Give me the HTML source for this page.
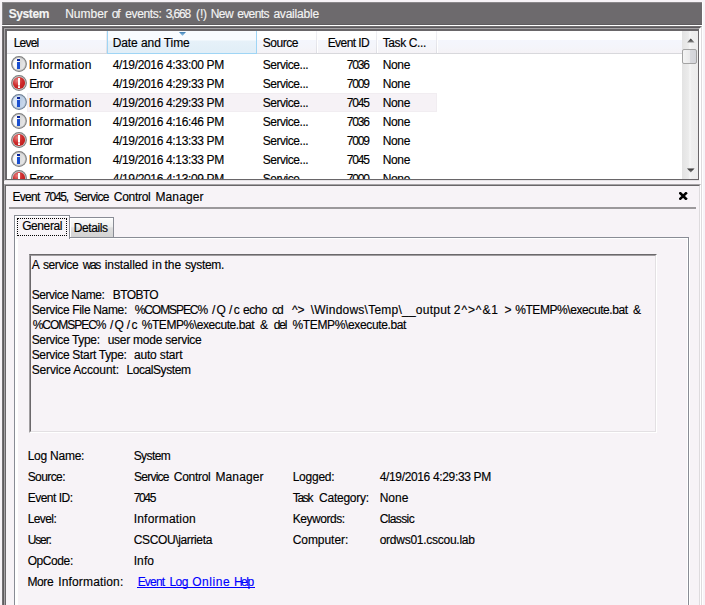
<!DOCTYPE html>
<html><head><meta charset="utf-8"><style>
html,body{margin:0;padding:0;}
body{width:705px;height:605px;overflow:hidden;position:relative;background:#f7f3f7;font-family:"Liberation Sans",sans-serif;font-size:12px;color:#000;}
.t{position:absolute;white-space:pre;line-height:15px;font-size:12px;-webkit-text-stroke:0.15px currentColor;}
</style></head><body>
<div style="position:absolute;left:2px;top:2px;width:700px;height:23px;background:#6d6a6d;box-sizing:border-box;border-top:1px solid #8a878a;border-left:1px solid #8a878a;border-bottom:1px solid #5e5b5e;"></div>
<div class="t" style="left:8.70px;top:7px;letter-spacing:-0.400px;font-weight:bold;color:#f4f4f4;">System</div>
<div class="t" style="left:65.20px;top:7px;color:#f4f4f4;">Number</div>
<div class="t" style="left:111.80px;top:7px;letter-spacing:-1.100px;color:#f4f4f4;">of</div>
<div class="t" style="left:125.30px;top:7px;letter-spacing:-0.367px;color:#f4f4f4;">events:</div>
<div class="t" style="left:165.70px;top:7px;letter-spacing:-1.125px;color:#f4f4f4;">3,668</div>
<div class="t" style="left:196.10px;top:7px;letter-spacing:-0.200px;color:#f4f4f4;">(!)</div>
<div class="t" style="left:210.70px;top:7px;letter-spacing:-0.500px;color:#f4f4f4;">New</div>
<div class="t" style="left:237.20px;top:7px;letter-spacing:-0.620px;color:#f4f4f4;">events</div>
<div class="t" style="left:273.40px;top:7px;letter-spacing:-0.212px;color:#f4f4f4;">available</div>
<div style="position:absolute;left:2px;top:25px;width:700px;height:1px;background:#ffffff;"></div>
<div style="position:absolute;left:702px;top:2px;width:1px;height:610px;background:#ffffff;"></div>
<div style="position:absolute;left:2px;top:26px;width:700px;height:600px;background:transparent;box-sizing:border-box;border-top:1px solid #737073;border-left:1px solid #737073;border-right:1px solid #dedbde;"></div>
<div style="position:absolute;left:3px;top:27px;width:698px;height:600px;background:transparent;box-sizing:border-box;border-top:1px solid #5d5a5d;border-left:1px solid #5d5a5d;border-right:1px solid #ffffff;"></div>
<div style="position:absolute;left:4px;top:28px;width:696px;height:153px;background:#ffffff;box-sizing:border-box;border-top:1px solid #a5a2a5;border-left:1px solid #a5a2a5;border-right:1px solid #ffffff;border-bottom:1px solid #e6e3e6;"></div>
<div style="position:absolute;left:5px;top:29px;width:694px;height:151px;background:#ffffff;box-sizing:border-box;border-top:2px solid #696669;border-left:2px solid #696669;border-right:1px solid #696669;border-bottom:1px solid #696669;"></div>
<div style="position:absolute;left:7px;top:31px;width:675px;height:9px;background:#ffffff;"></div>
<div style="position:absolute;left:7px;top:40px;width:675px;height:13px;background:linear-gradient(#f4f6fd,#f4f5fa 55%,#f5f2f6);"></div>
<div style="position:absolute;left:7px;top:53px;width:675px;height:1px;background:#d8d8dc;"></div>
<div style="position:absolute;left:106px;top:31px;width:1px;height:22px;background:linear-gradient(#f0f0f4,#dfdfe5);"></div>
<div style="position:absolute;left:107px;top:31px;width:1px;height:22px;background:#ffffff;"></div>
<div style="position:absolute;left:316px;top:31px;width:1px;height:22px;background:linear-gradient(#f0f0f4,#dfdfe5);"></div>
<div style="position:absolute;left:317px;top:31px;width:1px;height:22px;background:#ffffff;"></div>
<div style="position:absolute;left:376px;top:31px;width:1px;height:22px;background:linear-gradient(#f0f0f4,#dfdfe5);"></div>
<div style="position:absolute;left:377px;top:31px;width:1px;height:22px;background:#ffffff;"></div>
<div style="position:absolute;left:436px;top:31px;width:1px;height:22px;background:linear-gradient(#f0f0f4,#dfdfe5);"></div>
<div style="position:absolute;left:437px;top:31px;width:1px;height:22px;background:#ffffff;"></div>
<div style="position:absolute;left:107px;top:31px;width:150px;height:23px;background:linear-gradient(#f8fbfe 0,#f8fbfe 9px,#e6f1f9 10px,#e1eef7 100%);box-sizing:border-box;border:1px solid #9fd5f5;border-top:none;"></div>
<svg style="position:absolute;left:179px;top:32px" width="7" height="4"><defs><linearGradient id="sa" x1="0" y1="0" x2="0" y2="1"><stop offset="0" stop-color="#3d7fb5"/><stop offset="1" stop-color="#9ccbeb"/></linearGradient></defs><polygon points="0,0 7,0 3.5,4" fill="url(#sa)"/></svg>
<div class="t" style="left:13.70px;top:36px;letter-spacing:-0.800px;">Level</div>
<div class="t" style="left:112.70px;top:36px;letter-spacing:-0.083px;">Date and Time</div>
<div class="t" style="left:262.70px;top:36px;letter-spacing:-0.460px;">Source</div>
<div class="t" style="left:327.70px;top:36px;letter-spacing:-0.571px;">Event ID</div>
<div class="t" style="left:382.70px;top:36px;letter-spacing:-0.375px;">Task C...</div>
<div style="position:absolute;left:682px;top:31px;width:16px;height:148px;background:linear-gradient(90deg,#e3e3e3 0,#ebebeb 40%,#f6f6f6 50%,#efefef 60%,#ececec 100%);"></div>
<svg style="position:absolute;left:687px;top:38px" width="8" height="5"><defs><linearGradient id="ua" x1="0" y1="0" x2="0" y2="1"><stop offset="0" stop-color="#2a2a2a"/><stop offset="1" stop-color="#8a8a8a"/></linearGradient></defs><polygon points="0,4.5 7.5,4.5 3.75,0.5" fill="url(#ua)"/></svg>
<div style="position:absolute;left:682px;top:49px;width:15px;height:15px;background:linear-gradient(90deg,#f4f4f4,#eaeaeb 50%,#d8d9dd 56%,#d3d4d9);box-sizing:border-box;border:1px solid #a3a3a3;border-radius:2px;"></div>
<svg style="position:absolute;left:687px;top:168px" width="8" height="5"><defs><linearGradient id="da" x1="0" y1="0" x2="0" y2="1"><stop offset="0" stop-color="#2a2a2a"/><stop offset="1" stop-color="#8a8a8a"/></linearGradient></defs><polygon points="0,0.5 7.5,0.5 3.75,4.5" fill="url(#da)"/></svg>
<div style="position:absolute;left:0;top:0;width:682px;height:179px;overflow:hidden">
<svg style="position:absolute;left:11px;top:56px" width="16" height="16"><defs><linearGradient id="ig0" x1="0" y1="0" x2="1" y2="0.3"><stop offset="0" stop-color="#fbfbfb"/><stop offset="0.45" stop-color="#fbfbfb"/><stop offset="0.62" stop-color="#d9d9d9"/><stop offset="1" stop-color="#e6e6e6"/></linearGradient></defs><circle cx="8" cy="8" r="7.9" fill="#7a7a7a"/><circle cx="8" cy="8" r="6.9" fill="#c4c4c4"/><circle cx="8" cy="8" r="6.1" fill="url(#ig0)"/><rect x="6" y="3" width="3" height="2" fill="#08239a"/><rect x="6" y="6" width="3" height="7" fill="#1a4fd0"/></svg>
<div class="t" style="left:28.70px;top:58px;letter-spacing:0.270px;">Information</div>
<div class="t" style="left:112.70px;top:58px;letter-spacing:-0.342px;">4/19/2016 4:33:00 PM</div>
<div class="t" style="left:262.70px;top:58px;letter-spacing:-0.444px;">Service...</div>
<div class="t" style="left:346.70px;top:58px;letter-spacing:-1.167px;">7036</div>
<div class="t" style="left:382.70px;top:58px;letter-spacing:-0.333px;">None</div>
<svg style="position:absolute;left:11px;top:75px" width="16" height="16"><defs><radialGradient id="eg1" cx="0.35" cy="0.3" r="0.75"><stop offset="0" stop-color="#e68080"/><stop offset="0.55" stop-color="#cf2b2b"/><stop offset="1" stop-color="#c01e1e"/></radialGradient></defs><circle cx="8" cy="8" r="7.9" fill="#7a7a7a"/><circle cx="8" cy="8" r="6.9" fill="#c4c4c4"/><circle cx="8" cy="8" r="6.1" fill="url(#eg1)"/><rect x="7" y="3" width="2" height="7.6" fill="#fff"/><rect x="7" y="11.2" width="2" height="1.8" fill="#fff"/></svg>
<div class="t" style="left:29.20px;top:77px;letter-spacing:-0.675px;">Error</div>
<div class="t" style="left:112.70px;top:77px;letter-spacing:-0.342px;">4/19/2016 4:29:33 PM</div>
<div class="t" style="left:262.70px;top:77px;letter-spacing:-0.444px;">Service...</div>
<div class="t" style="left:346.70px;top:77px;letter-spacing:-1.167px;">7009</div>
<div class="t" style="left:382.70px;top:77px;letter-spacing:-0.333px;">None</div>
<div style="position:absolute;left:27px;top:93px;width:410px;height:19px;background:#f6f2f6;box-sizing:border-box;border:1px solid #f1edf1;"></div>
<svg style="position:absolute;left:11px;top:94px" width="16" height="16"><defs><linearGradient id="ig2" x1="0" y1="0" x2="1" y2="0.3"><stop offset="0" stop-color="#dde9fa"/><stop offset="0.45" stop-color="#dde9fa"/><stop offset="0.62" stop-color="#b8cbe4"/><stop offset="1" stop-color="#c9d8ec"/></linearGradient></defs><circle cx="8" cy="8" r="7.9" fill="#6a7c92"/><circle cx="8" cy="8" r="6.9" fill="#b3c2d4"/><circle cx="8" cy="8" r="6.1" fill="url(#ig2)"/><rect x="6" y="3" width="3" height="2" fill="#08239a"/><rect x="6" y="6" width="3" height="7" fill="#1a4fd0"/></svg>
<div class="t" style="left:28.70px;top:96px;letter-spacing:0.270px;">Information</div>
<div class="t" style="left:112.70px;top:96px;letter-spacing:-0.342px;">4/19/2016 4:29:33 PM</div>
<div class="t" style="left:262.70px;top:96px;letter-spacing:-0.444px;">Service...</div>
<div class="t" style="left:346.70px;top:96px;letter-spacing:-1.167px;">7045</div>
<div class="t" style="left:382.70px;top:96px;letter-spacing:-0.333px;">None</div>
<svg style="position:absolute;left:11px;top:113px" width="16" height="16"><defs><linearGradient id="ig3" x1="0" y1="0" x2="1" y2="0.3"><stop offset="0" stop-color="#fbfbfb"/><stop offset="0.45" stop-color="#fbfbfb"/><stop offset="0.62" stop-color="#d9d9d9"/><stop offset="1" stop-color="#e6e6e6"/></linearGradient></defs><circle cx="8" cy="8" r="7.9" fill="#7a7a7a"/><circle cx="8" cy="8" r="6.9" fill="#c4c4c4"/><circle cx="8" cy="8" r="6.1" fill="url(#ig3)"/><rect x="6" y="3" width="3" height="2" fill="#08239a"/><rect x="6" y="6" width="3" height="7" fill="#1a4fd0"/></svg>
<div class="t" style="left:28.70px;top:115px;letter-spacing:0.270px;">Information</div>
<div class="t" style="left:112.70px;top:115px;letter-spacing:-0.342px;">4/19/2016 4:16:46 PM</div>
<div class="t" style="left:262.70px;top:115px;letter-spacing:-0.444px;">Service...</div>
<div class="t" style="left:346.70px;top:115px;letter-spacing:-1.167px;">7036</div>
<div class="t" style="left:382.70px;top:115px;letter-spacing:-0.333px;">None</div>
<svg style="position:absolute;left:11px;top:132px" width="16" height="16"><defs><radialGradient id="eg4" cx="0.35" cy="0.3" r="0.75"><stop offset="0" stop-color="#e68080"/><stop offset="0.55" stop-color="#cf2b2b"/><stop offset="1" stop-color="#c01e1e"/></radialGradient></defs><circle cx="8" cy="8" r="7.9" fill="#7a7a7a"/><circle cx="8" cy="8" r="6.9" fill="#c4c4c4"/><circle cx="8" cy="8" r="6.1" fill="url(#eg4)"/><rect x="7" y="3" width="2" height="7.6" fill="#fff"/><rect x="7" y="11.2" width="2" height="1.8" fill="#fff"/></svg>
<div class="t" style="left:29.20px;top:134px;letter-spacing:-0.675px;">Error</div>
<div class="t" style="left:112.70px;top:134px;letter-spacing:-0.342px;">4/19/2016 4:13:33 PM</div>
<div class="t" style="left:262.70px;top:134px;letter-spacing:-0.444px;">Service...</div>
<div class="t" style="left:346.70px;top:134px;letter-spacing:-1.167px;">7009</div>
<div class="t" style="left:382.70px;top:134px;letter-spacing:-0.333px;">None</div>
<svg style="position:absolute;left:11px;top:151px" width="16" height="16"><defs><linearGradient id="ig5" x1="0" y1="0" x2="1" y2="0.3"><stop offset="0" stop-color="#fbfbfb"/><stop offset="0.45" stop-color="#fbfbfb"/><stop offset="0.62" stop-color="#d9d9d9"/><stop offset="1" stop-color="#e6e6e6"/></linearGradient></defs><circle cx="8" cy="8" r="7.9" fill="#7a7a7a"/><circle cx="8" cy="8" r="6.9" fill="#c4c4c4"/><circle cx="8" cy="8" r="6.1" fill="url(#ig5)"/><rect x="6" y="3" width="3" height="2" fill="#08239a"/><rect x="6" y="6" width="3" height="7" fill="#1a4fd0"/></svg>
<div class="t" style="left:28.70px;top:153px;letter-spacing:0.270px;">Information</div>
<div class="t" style="left:112.70px;top:153px;letter-spacing:-0.342px;">4/19/2016 4:13:33 PM</div>
<div class="t" style="left:262.70px;top:153px;letter-spacing:-0.444px;">Service...</div>
<div class="t" style="left:346.70px;top:153px;letter-spacing:-1.167px;">7045</div>
<div class="t" style="left:382.70px;top:153px;letter-spacing:-0.333px;">None</div>
<svg style="position:absolute;left:11px;top:170px" width="16" height="16"><defs><radialGradient id="eg6" cx="0.35" cy="0.3" r="0.75"><stop offset="0" stop-color="#e68080"/><stop offset="0.55" stop-color="#cf2b2b"/><stop offset="1" stop-color="#c01e1e"/></radialGradient></defs><circle cx="8" cy="8" r="7.9" fill="#7a7a7a"/><circle cx="8" cy="8" r="6.9" fill="#c4c4c4"/><circle cx="8" cy="8" r="6.1" fill="url(#eg6)"/><rect x="7" y="3" width="2" height="7.6" fill="#fff"/><rect x="7" y="11.2" width="2" height="1.8" fill="#fff"/></svg>
<div class="t" style="left:29.20px;top:172px;letter-spacing:-0.675px;">Error</div>
<div class="t" style="left:112.70px;top:172px;letter-spacing:-0.342px;">4/19/2016 4:13:09 PM</div>
<div class="t" style="left:262.70px;top:172px;letter-spacing:-0.444px;">Service...</div>
<div class="t" style="left:346.70px;top:172px;letter-spacing:-1.167px;">7000</div>
<div class="t" style="left:382.70px;top:172px;letter-spacing:-0.333px;">None</div>
</div>
<div style="position:absolute;left:4px;top:184px;width:697px;height:430px;background:#f7f3f7;box-sizing:border-box;border-top:1px solid #a5a2a5;border-left:1px solid #a5a2a5;border-right:1px solid #ffffff;"></div>
<div style="position:absolute;left:5px;top:185px;width:695px;height:430px;background:#f7f3f7;box-sizing:border-box;border-top:1px solid #696669;border-left:1px solid #696669;border-right:1px solid #dedbde;"></div>
<div class="t" style="left:12.50px;top:190px;letter-spacing:-0.725px;">Event</div>
<div class="t" style="left:44.20px;top:190px;letter-spacing:-1.300px;">7045,</div>
<div class="t" style="left:73.70px;top:190px;letter-spacing:-0.717px;">Service</div>
<div class="t" style="left:113.80px;top:190px;letter-spacing:-0.283px;">Control</div>
<div class="t" style="left:155.50px;top:190px;letter-spacing:0.100px;">Manager</div>
<svg style="position:absolute;left:679px;top:192px" width="9" height="8"><path d="M1.3,1.3 L6.9,6.7 M6.9,1.3 L1.3,6.7" stroke="#000" stroke-width="2.6" stroke-linecap="square"/></svg>
<div style="position:absolute;left:9px;top:207px;width:687px;height:2px;background:#9b989b;"></div>
<div style="position:absolute;left:14px;top:237px;width:675px;height:380px;background:#f7f3f7;box-sizing:border-box;border-top:1px solid #898c95;border-left:1px solid #898c95;border-right:1px solid #898c95;"></div>
<div style="position:absolute;left:15px;top:238px;width:673px;height:380px;background:#f7f3f7;box-sizing:border-box;border-top:1px solid #fff;border-left:3px solid #fff;border-right:1px solid #fff;"></div>
<div style="position:absolute;left:689px;top:238px;width:1px;height:380px;background:#ffffff;"></div>
<div style="position:absolute;left:69px;top:217px;width:45px;height:20px;background:linear-gradient(#fcfcfc,#efefef 45%,#dedede 52%,#d3d3d3);box-sizing:border-box;border:1px solid #898c95;border-bottom:none;"></div>
<div style="position:absolute;left:70px;top:218px;width:43px;height:19px;background:transparent;box-sizing:border-box;border-top:1px solid #fff;border-left:1px solid #fff;"></div>
<div style="position:absolute;left:14px;top:215px;width:56px;height:24px;background:#f7f3f7;box-sizing:border-box;border:1px solid #898c95;border-bottom:none;"></div>
<div style="position:absolute;left:15px;top:216px;width:54px;height:23px;background:#f7f3f7;box-sizing:border-box;border-top:1px solid #fff;border-left:1px solid #fff;"></div>
<div style="position:absolute;left:17px;top:218px;width:50px;height:18px;background:transparent;box-sizing:border-box;border:1px dotted #000;"></div>
<div class="t" style="left:22.20px;top:219px;letter-spacing:-0.417px;">General</div>
<div class="t" style="left:73.70px;top:221px;letter-spacing:-0.383px;">Details</div>
<div style="position:absolute;left:29px;top:254px;width:628px;height:179px;background:#f7f3f7;box-sizing:border-box;border-top:1px solid #6b686b;border-left:1px solid #a09da0;border-right:1px solid #ffffff;border-bottom:1px solid #ffffff;"></div>
<div style="position:absolute;left:30px;top:255px;width:626px;height:177px;background:#f7f3f7;box-sizing:border-box;border-top:1px solid #a09da0;border-left:1px solid #6b686b;border-right:1px solid #e3e0e3;border-bottom:1px solid #e3e0e3;"></div>
<div class="t" style="left:31.80px;top:258px;">A</div>
<div class="t" style="left:42.90px;top:258px;letter-spacing:-0.383px;">service</div>
<div class="t" style="left:82.80px;top:258px;letter-spacing:-1.400px;">was</div>
<div class="t" style="left:104.80px;top:258px;letter-spacing:-0.113px;">installed</div>
<div class="t" style="left:152.10px;top:258px;letter-spacing:0.400px;">in</div>
<div class="t" style="left:164.50px;top:258px;">the</div>
<div class="t" style="left:184.90px;top:258px;letter-spacing:-0.317px;">system.</div>
<div class="t" style="left:31.70px;top:288px;letter-spacing:-0.467px;">Service Name:</div>
<div class="t" style="left:112.80px;top:288px;letter-spacing:-0.620px;">BTOBTO</div>
<div class="t" style="left:31.70px;top:303px;letter-spacing:-0.341px;">Service File Name:</div>
<div class="t" style="left:134.70px;top:303px;letter-spacing:-1.075px;">%COMSPEC%</div>
<div class="t" style="left:212.00px;top:303px;letter-spacing:1.200px;">/Q</div>
<div class="t" style="left:229.10px;top:303px;letter-spacing:1.200px;">/c</div>
<div class="t" style="left:243.10px;top:303px;letter-spacing:-0.533px;">echo</div>
<div class="t" style="left:272.00px;top:303px;letter-spacing:-1.000px;">cd</div>
<div class="t" style="left:291.90px;top:303px;letter-spacing:0.100px;">^&gt;</div>
<div class="t" style="left:310.70px;top:303px;letter-spacing:0.238px;">\Windows\Temp\__output</div>
<div class="t" style="left:453.80px;top:303px;letter-spacing:0.920px;">2^&gt;^&amp;1</div>
<div class="t" style="left:504.40px;top:303px;">&gt;</div>
<div class="t" style="left:515.20px;top:303px;letter-spacing:-0.418px;">%TEMP%\execute.bat</div>
<div class="t" style="left:632.90px;top:303px;">&amp;</div>
<div class="t" style="left:32.70px;top:318px;letter-spacing:-1.025px;">%COMSPEC%</div>
<div class="t" style="left:109.90px;top:318px;letter-spacing:1.200px;">/Q</div>
<div class="t" style="left:126.70px;top:318px;letter-spacing:1.500px;">/c</div>
<div class="t" style="left:141.70px;top:318px;letter-spacing:-0.424px;">%TEMP%\execute.bat</div>
<div class="t" style="left:260.10px;top:318px;">&amp;</div>
<div class="t" style="left:273.70px;top:318px;letter-spacing:-1.150px;">del</div>
<div class="t" style="left:292.50px;top:318px;letter-spacing:-0.359px;">%TEMP%\execute.bat</div>
<div class="t" style="left:31.70px;top:333px;letter-spacing:-0.350px;">Service Type:</div>
<div class="t" style="left:107.70px;top:333px;letter-spacing:-0.250px;">user mode service</div>
<div class="t" style="left:31.70px;top:348px;letter-spacing:-0.333px;">Service Start Type:</div>
<div class="t" style="left:133.90px;top:348px;letter-spacing:-0.156px;">auto start</div>
<div class="t" style="left:31.70px;top:363px;letter-spacing:-0.140px;">Service Account:</div>
<div class="t" style="left:126.40px;top:363px;letter-spacing:-0.410px;">LocalSystem</div>
<div class="t" style="left:27.70px;top:449px;letter-spacing:-0.250px;">Log Name:</div>
<div class="t" style="left:133.70px;top:449px;letter-spacing:-0.600px;">System</div>
<div class="t" style="left:27.70px;top:470px;letter-spacing:-0.583px;">Source:</div>
<div class="t" style="left:134.10px;top:470px;letter-spacing:-0.783px;">Service</div>
<div class="t" style="left:173.80px;top:470px;letter-spacing:-0.283px;">Control</div>
<div class="t" style="left:215.50px;top:470px;letter-spacing:0.100px;">Manager</div>
<div class="t" style="left:27.70px;top:491px;letter-spacing:-0.500px;">Event ID:</div>
<div class="t" style="left:133.70px;top:491px;letter-spacing:-1.333px;">7045</div>
<div class="t" style="left:27.70px;top:512px;letter-spacing:-0.600px;">Level:</div>
<div class="t" style="left:133.70px;top:512px;letter-spacing:0.200px;">Information</div>
<div class="t" style="left:27.70px;top:533px;letter-spacing:-1.125px;">User:</div>
<div class="t" style="left:133.70px;top:533px;letter-spacing:-0.362px;">CSCOU\jarrieta</div>
<div class="t" style="left:27.70px;top:554px;letter-spacing:-0.417px;">OpCode:</div>
<div class="t" style="left:133.70px;top:554px;letter-spacing:0.100px;">Info</div>
<div class="t" style="left:27.50px;top:575px;letter-spacing:-0.400px;">More</div>
<div class="t" style="left:58.20px;top:575px;letter-spacing:0.155px;">Information:</div>
<div class="t" style="left:137.70px;top:575px;letter-spacing:-0.825px;color:#0000ff;">Event</div>
<div class="t" style="left:169.40px;top:575px;letter-spacing:-0.550px;color:#0000ff;">Log</div>
<div class="t" style="left:192.20px;top:575px;letter-spacing:0.560px;color:#0000ff;">Online</div>
<div class="t" style="left:233.90px;top:575px;letter-spacing:-1.500px;color:#0000ff;">Help</div>
<div style="position:absolute;left:137px;top:587px;width:118px;height:1px;background:#0000ff;"></div>
<div class="t" style="left:292.70px;top:470px;letter-spacing:-0.250px;">Logged:</div>
<div class="t" style="left:379.70px;top:470px;letter-spacing:-0.347px;">4/19/2016 4:29:33 PM</div>
<div class="t" style="left:292.70px;top:491px;letter-spacing:-1.300px;">Task</div>
<div class="t" style="left:319.10px;top:491px;letter-spacing:-0.262px;">Category:</div>
<div class="t" style="left:379.70px;top:491px;">None</div>
<div class="t" style="left:292.70px;top:512px;letter-spacing:-0.438px;">Keywords:</div>
<div class="t" style="left:379.70px;top:512px;letter-spacing:-0.617px;">Classic</div>
<div class="t" style="left:292.70px;top:533px;letter-spacing:-0.050px;">Computer:</div>
<div class="t" style="left:379.70px;top:533px;letter-spacing:-0.263px;">ordws01.cscou.lab</div>
</body></html>
